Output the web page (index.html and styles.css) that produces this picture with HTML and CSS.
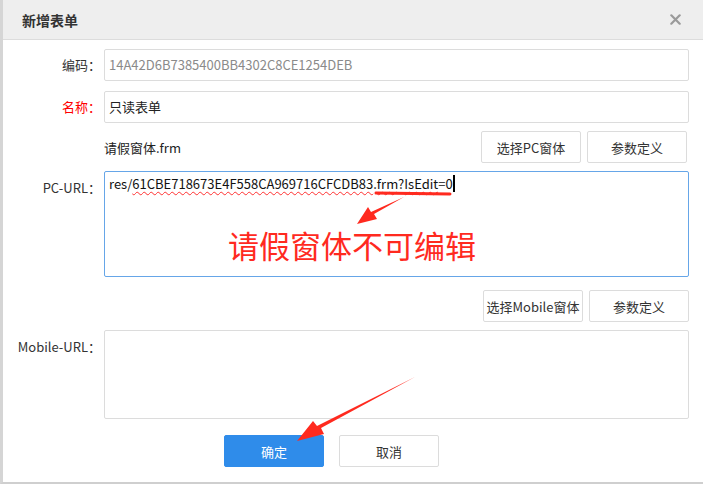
FILE: index.html
```html
<!DOCTYPE html>
<html lang="zh-CN">
<head>
  <meta charset="UTF-8">
  <title>新增表单</title>
  <link rel="stylesheet" href="styles.css">
</head>
<body>

<div class="dialog">
  <!-- Title bar -->
  <div class="dialog-head">
    <span class="dialog-title">新增表单</span>
    <svg class="close-icon" width="11" height="11" viewBox="0 0 11 11">
      <path d="M1.3 1.3 L9.7 9.7 M9.7 1.3 L1.3 9.7" stroke="#9a9a9a" stroke-width="2.2" stroke-linecap="round"/>
    </svg>
  </div>

  <div class="dialog-body">
    <div class="form-row">
      <label class="form-label">编码：</label>
      <div class="text-input readonly">14A42D6B7385400BB4302C8CE1254DEB</div>
    </div>

    <div class="form-row">
      <label class="form-label required">名称：</label>
      <div class="text-input">只读表单</div>
    </div>

    <div class="form-row tools-row pc-tools">
      <span class="file-name">请假窗体.frm</span>
      <div class="btn-group">
        <button class="btn">选择PC窗体</button>
        <button class="btn">参数定义</button>
      </div>
    </div>

    <div class="form-row area-row">
      <label class="form-label">PC-URL：</label>
      <div class="text-area focused">res/<span class="typo">61CBE718673E4F558CA969716CFCDB83</span>.<span class="typo">frm</span>?<span class="typo">IsEdit</span>=0<span class="caret"></span></div>
    </div>

    <div class="form-row tools-row mobile-tools">
      <div class="btn-group">
        <button class="btn">选择Mobile窗体</button>
        <button class="btn">参数定义</button>
      </div>
    </div>

    <div class="form-row area-row">
      <label class="form-label">Mobile-URL：</label>
      <div class="text-area small"></div>
    </div>

    <div class="dialog-foot">
      <button class="btn btn-primary">确定</button>
      <button class="btn">取消</button>
    </div>
  </div>

  <!-- Screenshot annotations drawn on top -->
  <div class="note-text">请假窗体不可编辑</div>
  <svg class="note-marks" width="703" height="484" viewBox="0 0 703 484">
    <path d="M376 193 L450 194" stroke="#ff2a1f" stroke-width="3" stroke-linecap="round"/>
    <path d="M404 197 L374 214 L377 219 L357 224 L368 207 L371 212 Z" fill="#ff2a1f"/>
    <path d="M415 377 L321 428 L324 434 L297 441 L313 421 L317 426 Z" fill="#ff2a1f"/>
  </svg>
</div>

</body>
</html>
```

FILE: styles.css
```css
/* Basic styles */
body {
  margin: 0;
  font-family: "Noto Sans CJK SC", "Noto Sans", sans-serif;
  font-size: 13px;
  color: #333;
  background: #fff;
  overflow: hidden;
}

.dialog {
  position: relative;
  width: 700px;
  height: 482px;
  border-left: 3px solid #d5d5d5;
  border-bottom: 2px solid #cfcfcf;
  background: #fff;
}

/* Title bar */
.dialog-head {
  height: 40px;
  background: #eeeeee;
  border-bottom: 1px solid #dcdcdc;
  display: flex;
  align-items: center;
  justify-content: space-between;
  padding: 0 22px 0 19px;
  box-sizing: border-box;
}

.dialog-title {
  font-size: 14px;
  font-weight: bold;
  color: #333;
}

/* Form */
.dialog-body {
  padding-top: 9px;
}

.form-row {
  display: flex;
  margin-bottom: 10px;
}

.form-label {
  width: 101px;
  padding-right: 3px;
  box-sizing: border-box;
  text-align: right;
  line-height: 32px;
  color: #333;
}

.form-label.required {
  color: #ff0000;
}

.text-input {
  width: 585px;
  height: 32px;
  border: 1px solid #dcdcdc;
  border-radius: 2px;
  box-sizing: border-box;
  padding-left: 4px;
  line-height: 30px;
  color: #222;
}

.text-input.readonly {
  color: #8a8a8a;
}

.tools-row {
  height: 32px;
  align-items: center;
  margin-bottom: 8px;
}

.pc-tools {
  margin-top: -2px;
}

.file-name {
  margin-left: 101px;
  color: #222;
}

.btn-group {
  display: flex;
  gap: 6px;
  margin-left: auto;
  margin-right: 16px;
}

.mobile-tools {
  margin-top: 13px;
}

.mobile-tools .btn-group {
  margin-right: 14px;
}

.btn {
  width: 100px;
  height: 32px;
  padding: 0;
  background: #fff;
  border: 1px solid #dcdcdc;
  border-radius: 2px;
  font-family: inherit;
  font-size: 13px;
  color: #333;
}

.btn-primary {
  background: #2f8cea;
  border-color: #2f8cea;
  color: #fff;
}

.area-row .form-label {
  line-height: 18px;
  padding-top: 8px;
}

.text-area {
  width: 585px;
  height: 106px;
  border: 1px solid #dcdcdc;
  border-radius: 2px;
  box-sizing: border-box;
  padding: 2px 4px;
  line-height: 20px;
  color: #111;
}

.text-area.focused {
  border-color: #66a6e8;
}

.text-area.small {
  height: 89px;
}

/* Spell check squiggles */
.typo {
  text-decoration: underline wavy #ff3030;
  text-decoration-thickness: 1px;
  text-underline-offset: 2px;
}

.caret {
  display: inline-block;
  width: 2px;
  height: 17px;
  background: #000;
  vertical-align: -3px;
}

.dialog-foot {
  display: flex;
  gap: 15px;
  padding-left: 221px;
  margin-top: 16px;
}

/* Annotations */
.note-text {
  position: absolute;
  left: 225px;
  top: 225px;
  font-size: 31px;
  line-height: 40px;
  color: #ff2a1f;
}

.note-marks {
  position: absolute;
  left: -3px;
  top: 0;
  pointer-events: none;
}
```
